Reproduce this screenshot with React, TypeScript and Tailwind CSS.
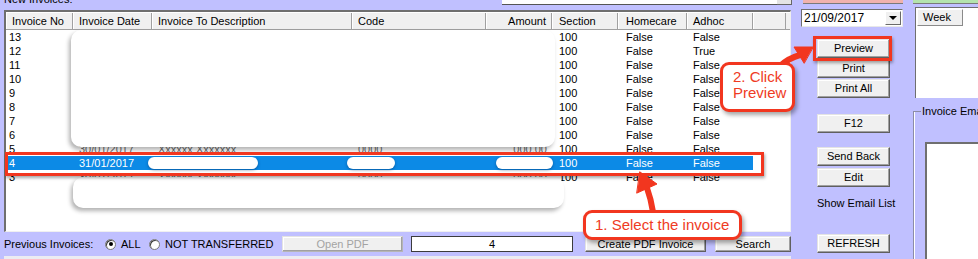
import React from "react";

// Column setup for the invoice grid (widths follow the Delphi form)
const COLS = [
  { label: "Invoice No", w: "w-[67px]", head: "pl-[6px]", cell: "pl-[3px]" },
  { label: "Invoice Date", w: "w-[79px]", head: "pl-[6px]", cell: "pl-[6px]" },
  { label: "Invoice To Description", w: "w-[200px]", head: "pl-[6px]", cell: "pl-[6px]" },
  { label: "Code", w: "w-[134px]", head: "pl-[6px]", cell: "pl-[6px]" },
  { label: "Amount", w: "w-[66px]", head: "pr-[5px] text-right", cell: "pr-[5px] text-right" },
  { label: "Section", w: "w-[66px]", head: "pl-[7px]", cell: "pl-[7px]" },
  { label: "Homecare", w: "w-[69px]", head: "pl-[8px]", cell: "pl-[8px]" },
  { label: "Adhoc", w: "w-[66px]", head: "pl-[6px]", cell: "pl-[6px]" },
];

const ROWS: { cells: string[]; selected?: boolean }[] = [
  { cells: ["13", "", "", "", "", "100", "False", "False"] },
  { cells: ["12", "", "", "", "", "100", "False", "True"] },
  { cells: ["11", "", "", "", "", "100", "False", "False"] },
  { cells: ["10", "", "", "", "", "100", "False", "False"] },
  { cells: ["9", "", "", "", "", "100", "False", "False"] },
  { cells: ["8", "", "", "", "", "100", "False", "False"] },
  { cells: ["7", "", "", "", "", "100", "False", "False"] },
  { cells: ["6", "", "", "", "", "100", "False", "False"] },
  { cells: ["5", "30/01/2017", "Xxxxxx Xxxxxxx", "0000", "000.00", "100", "False", "False"] },
  { cells: ["4", "31/01/2017", "", "", "", "100", "False", "False"], selected: true },
  { cells: ["3", "30/01/2017", "Xxxxxx Xxxxxxx", "0000", "000.00", "100", "False", "False"] },
];

function WinButton({ children, className = "", disabled = false }: { children: React.ReactNode; className?: string; disabled?: boolean }) {
  return (
    <div
      className={`flex items-center justify-center bg-[#f0f0f0] border border-t-[#e3e3e3] border-l-[#e3e3e3] border-r-[#5f5f5f] border-b-[#5f5f5f] shadow-[inset_-1px_-1px_0_#a0a0a0,inset_1px_1px_0_#ffffff] leading-none ${
        disabled ? "text-[#a3a3a3]" : "text-black"
      } ${className}`}
    >
      {children}
    </div>
  );
}

function Radio({ checked }: { checked?: boolean }) {
  return (
    <div className="w-[11px] h-[11px] rounded-full bg-white border border-[#7a7a7a] shadow-[inset_1px_1px_0_#404040] flex items-center justify-center shrink-0">
      {checked && <div className="w-[4px] h-[4px] rounded-full bg-black" />}
    </div>
  );
}

export default function App() {
  return (
    <div className="relative w-[978px] h-[259px] overflow-hidden bg-[#c0c0ff] font-['Liberation_Sans',Arial,sans-serif] text-[11px] leading-[14px] text-black">
      {/* bottoms of the controls that sit above this crop */}
      <div className="flex h-[7px] items-start overflow-hidden">
        <div className="w-[502px] h-[7px] pl-[4px] overflow-hidden">
          <div className="-mt-[8px]">New Invoices:</div>
        </div>
        <div className="w-[275px] h-[5px] bg-white border-b border-b-[#555555]" />
        <div className="w-[15px] h-[5px] bg-[#e4e4e4] border-b border-r border-b-[#666666] border-r-[#666666]" />
        <div className="w-[11px]" />
        <div className="w-[100px] h-[4px] bg-[#f0b2ad] border-b border-b-[#7a7a7a]" />
        <div className="w-[10px]" />
        <div className="flex-1 h-[4px] bg-[#b4e4ad] border-b border-b-[#7a7a7a]" />
      </div>

      <div className="flex items-start">
        {/* left: grid + previous invoices bar */}
        <div className="ml-[4px] mt-[3px] w-[787px] flex flex-col">
          <div className="h-[222px] bg-white border-t-2 border-l-2 border-r border-b border-t-[#6f6f6f] border-l-[#6f6f6f] border-r-[#f0f0f0] border-b-[#f0f0f0] overflow-hidden">
            <div className="flex h-[18px] bg-[#f0f0f0] border-t border-b border-t-white border-b-[#a0a0a0]">
              {COLS.map((c) => (
                <div
                  key={c.label}
                  className={`${c.w} ${c.head} shrink-0 h-full leading-[16px] border-r border-r-[#a0a0a0] shadow-[inset_1px_0_0_#ffffff] whitespace-nowrap overflow-hidden`}
                >
                  {c.label}
                </div>
              ))}
              <div className="w-[33px] shrink-0 h-full border-r border-r-[#a0a0a0] shadow-[inset_1px_0_0_#ffffff]" />
            </div>
            {ROWS.map((r) => (
              <div key={r.cells[0]} className="flex h-[14px]">
                {COLS.map((c, i) => (
                  <div
                    key={c.label}
                    className={`${c.w} ${c.cell} shrink-0 whitespace-nowrap overflow-hidden ${
                      r.selected ? "bg-[#0c8ae6] text-white" : i > 0 && i < 5 ? "text-[#6a6a6a]" : ""
                    }`}
                  >
                    {r.cells[i]}
                  </div>
                ))}
              </div>
            ))}
          </div>

          <div className="mt-[4px] h-[16px] flex items-center whitespace-nowrap">
            <span className="w-[101px]">Previous Invoices:</span>
            <div className="w-[44px] flex items-center gap-[5px]">
              <Radio checked />
              <span>ALL</span>
            </div>
            <div className="w-[133px] flex items-center gap-[5px]">
              <Radio />
              <span>NOT TRANSFERRED</span>
            </div>
            <WinButton disabled className="w-[121px] h-[16px] border-r-[#b5b5b5] border-b-[#b5b5b5]">
              Open PDF
            </WinButton>
            <div className="ml-[8px] w-[162px] h-[16px] bg-white border border-[#3c3c3c] flex items-center justify-center">4</div>
            <WinButton className="ml-[12px] w-[121px] h-[16px]">Create PDF Invoice</WinButton>
            <WinButton className="ml-[9px] w-[76px] h-[16px]">Search</WinButton>
          </div>
          <div className="mt-[4px] h-[3px] bg-[#ececf2]" />
        </div>

        {/* middle: date + action buttons */}
        <div className="mt-[2px] w-[122px] flex flex-col">
          <div className="ml-[10px] w-[102px] h-[18px] bg-white border border-t-[#6f6f6f] border-l-[#6f6f6f] border-r-[#e8e8e8] border-b-[#e8e8e8] flex items-center">
            <span className="pl-[2px] flex-1 text-[12px]">21/09/2017</span>
            <div className="w-[16px] h-[14px] mr-[1px] bg-[#f0f0f0] border border-t-white border-l-white border-r-[#6a6a6a] border-b-[#6a6a6a] flex items-center justify-center">
              <div className="w-0 h-0 border-l-[4px] border-r-[4px] border-t-[4px] border-l-transparent border-r-transparent border-t-black" />
            </div>
          </div>
          <WinButton className="ml-[26px] mt-[12px] w-[73px] h-[19px]">Preview</WinButton>
          <WinButton className="ml-[26px] mt-[1px] w-[73px] h-[19px]">Print</WinButton>
          <WinButton className="ml-[26px] mt-[1px] w-[73px] h-[19px]">Print All</WinButton>
          <WinButton className="ml-[26px] mt-[16px] w-[73px] h-[19px]">F12</WinButton>
          <WinButton className="ml-[26px] mt-[14px] w-[73px] h-[19px]">Send Back</WinButton>
          <WinButton className="ml-[26px] mt-[2px] w-[73px] h-[19px]">Edit</WinButton>
          <div className="ml-[26px] mt-[9px] w-[80px] whitespace-nowrap">Show Email List</div>
          <WinButton className="ml-[26px] mt-[24px] w-[73px] h-[19px]">REFRESH</WinButton>
        </div>

        {/* right: week list + invoice email group */}
        <div className="flex-1 flex flex-col min-w-0">
          <div className="ml-[2px] w-[80px] h-[91px] bg-white border-t border-l border-t-[#6f6f6f] border-l-[#6f6f6f]">
            <div className="ml-[1px] mt-[1px] w-[46px] h-[17px] bg-[#f0f0f0] border border-t-white border-l-white border-r-[#8a8a8a] border-b-[#8a8a8a] pl-[5px] leading-[15px]">
              Week
            </div>
          </div>
          <fieldset className="mt-[6px] w-[80px] border-t border-l border-t-[#8c8ca6] border-l-[#8c8ca6] shadow-[inset_1px_0_0_#ffffff]">
            <legend className="ml-[7px] px-[1px] whitespace-nowrap">Invoice Email Address</legend>
            <div className="ml-[11px] mt-[24px] h-[120px] bg-white border-t-2 border-l-2 border-t-[#6f6f6f] border-l-[#6f6f6f]" />
          </fieldset>
        </div>
      </div>

      {/* screenshot annotations */}
      <div className="absolute left-[71px] top-[30px] w-[484px] h-[117px] bg-white rounded-[10px] shadow-[-2px_3px_4px_rgba(0,0,0,0.3)]" />
      <div className="absolute left-[73px] top-[177px] w-[491px] h-[31px] bg-white rounded-[10px] shadow-[-2px_3px_4px_rgba(0,0,0,0.3)]" />
      <div className="absolute left-[148px] top-[157px] w-[110px] h-[12px] bg-white rounded-[6px] shadow-[0_1px_3px_rgba(0,40,90,0.5)]" />
      <div className="absolute left-[347px] top-[157px] w-[48px] h-[12px] bg-white rounded-[6px] shadow-[0_1px_3px_rgba(0,40,90,0.5)]" />
      <div className="absolute left-[496px] top-[157px] w-[57px] h-[12px] bg-white rounded-[6px] shadow-[0_1px_3px_rgba(0,40,90,0.5)]" />

      <div className="absolute left-[5px] top-[152px] w-[759px] h-[24px] border-[3px] border-[#f2361f] shadow-[1px_2px_3px_rgba(0,0,0,0.35)]" />
      <div className="absolute left-[813px] top-[36px] w-[79px] h-[25px] border-[3px] border-[#f2361f] shadow-[1px_2px_3px_rgba(0,0,0,0.35)]" />

      <svg className="absolute left-0 top-0 pointer-events-none" width="978" height="259" viewBox="0 0 978 259">
        <g fill="#f2361f" stroke="#f2361f" strokeLinecap="round">
          <path d="M653 212 Q651 199 647 188" fill="none" strokeWidth="6" />
          <polygon points="640,172 657,184 637,193" strokeWidth="1" />
          <path d="M780 66 Q789 58 800 55" fill="none" strokeWidth="6" />
          <polygon points="813,47 794,47 804,63" strokeWidth="1" />
        </g>
      </svg>

      <div className="absolute left-[720px] top-[62px] w-[75px] h-[50px] bg-white border-[3px] border-[#f2361f] rounded-[9px] shadow-[2px_3px_4px_rgba(0,0,0,0.35)] pl-[10px] pt-[4px] text-[15px] leading-[16px] text-[#ef3b24]">
        <div>2. Click</div>
        <div>Preview</div>
      </div>
      <div className="absolute left-[583px] top-[210px] w-[159px] h-[30px] bg-white border-[3px] border-[#f2361f] rounded-[9px] shadow-[2px_3px_4px_rgba(0,0,0,0.35)] pl-[9px] text-[15px] leading-[24px] text-[#ef3b24] whitespace-nowrap">
        1. Select the invoice
      </div>
    </div>
  );
}
